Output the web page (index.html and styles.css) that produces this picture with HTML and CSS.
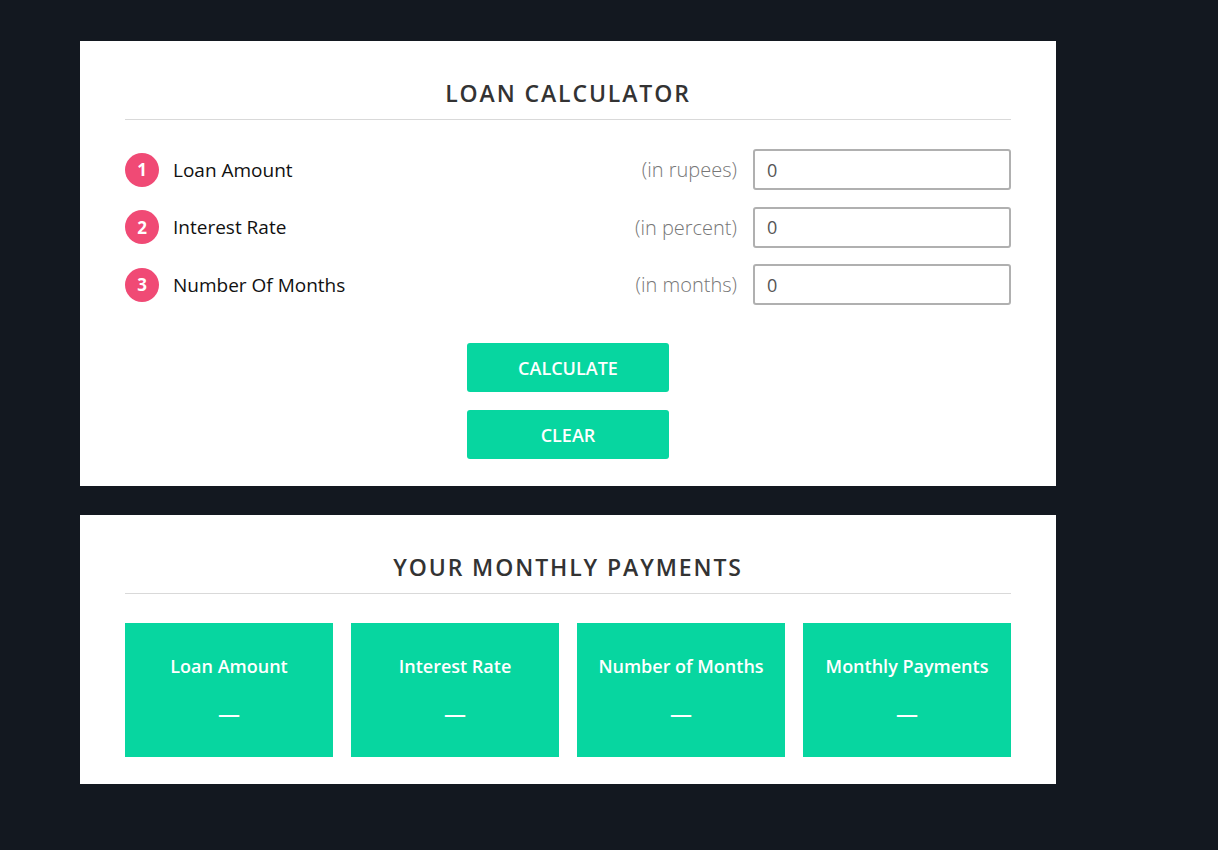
FILE: index.html
```html
<!DOCTYPE html>
<html lang="en">
<head>
<meta charset="utf-8">
<title>Loan Calculator</title>
<link rel="stylesheet" href="styles.css">
</head>
<body>
<main class="page">
  <section class="card">
    <h2 class="card-title">LOAN CALCULATOR</h2>
    <div class="rows">
      <div class="row">
        <span class="badge">1</span>
        <span class="label">Loan Amount</span>
        <span class="unit">(in rupees)</span>
        <input class="field" type="text" value="0">
      </div>
      <div class="row">
        <span class="badge">2</span>
        <span class="label">Interest Rate</span>
        <span class="unit">(in percent)</span>
        <input class="field" type="text" value="0">
      </div>
      <div class="row">
        <span class="badge">3</span>
        <span class="label">Number Of Months</span>
        <span class="unit">(in months)</span>
        <input class="field" type="text" value="0">
      </div>
    </div>
    <div class="actions">
      <button class="btn" type="button">CALCULATE</button>
      <button class="btn" type="button">CLEAR</button>
    </div>
  </section>
  <section class="card card-results">
    <h2 class="card-title">YOUR MONTHLY PAYMENTS</h2>
    <div class="results">
      <div class="result"><div class="result-title">Loan Amount</div><div class="result-value">—</div></div>
      <div class="result"><div class="result-title">Interest Rate</div><div class="result-value">—</div></div>
      <div class="result"><div class="result-title">Number of Months</div><div class="result-value">—</div></div>
      <div class="result"><div class="result-title">Monthly Payments</div><div class="result-value">—</div></div>
    </div>
  </section>
</main>
</body>
</html>
```

FILE: styles.css
```css
* { box-sizing: border-box; }
html, body {
  margin: 0;
  padding: 0;
  background: #131820;
  height: 100%;
}
body {
  font-family: "Open Sans", "Noto Sans", sans-serif;
  color: #111;
}
.page {
  padding: 41px 0 0 80px;
  display: flex;
  flex-direction: column;
  gap: 29px;
}
.card {
  width: 976px;
  background: #fff;
  padding: 40px 45px 27px;
}
.card-title {
  margin: 0;
  font-size: 23px;
  line-height: 24px;
  font-weight: 600;
  letter-spacing: 1.9px;
  color: #333;
  text-align: center;
  padding-bottom: 14px;
  border-bottom: 1px solid #d9d9d9;
}
.rows {
  margin-top: 29px;
  display: flex;
  flex-direction: column;
  gap: 16.5px;
}
.row {
  display: flex;
  align-items: center;
  height: 41px;
}
.badge {
  width: 34px;
  height: 34px;
  border-radius: 50%;
  background: #f04a75;
  color: #fff;
  font-weight: 700;
  font-size: 17px;
  display: flex;
  align-items: center;
  justify-content: center;
  flex: none;
}
.label {
  margin-left: 14px;
  font-size: 19px;
  color: #111;
  flex: 1;
}
.unit {
  font-size: 20px;
  font-weight: 300;
  color: #777;
  margin-right: 16px;
}
.field {
  width: 258px;
  height: 41px;
  border: 2px solid #b0b0b0;
  border-radius: 3px;
  padding: 0 12px;
  font-family: inherit;
  font-size: 18px;
  color: #555;
  background: #fff;
  outline: none;
}
.actions {
  margin-top: 38px;
  display: flex;
  flex-direction: column;
  align-items: center;
  gap: 18px;
}
.btn {
  width: 202px;
  height: 49px;
  border: 0;
  border-radius: 3px;
  background: #07d6a0;
  color: #fff;
  font-family: inherit;
  font-size: 18px;
  font-weight: 600;
  cursor: pointer;
}
.results {
  margin-top: 29px;
  display: grid;
  grid-template-columns: repeat(4, 1fr);
  gap: 18px;
}
.result {
  background: #07d6a0;
  height: 134px;
  color: #fff;
  text-align: center;
  padding-top: 31px;
}
.result-title {
  font-size: 18px;
  font-weight: 600;
  line-height: 24px;
}
.result-value {
  margin-top: 22px;
  font-size: 22px;
  font-weight: 600;
  line-height: 26px;
}
```
